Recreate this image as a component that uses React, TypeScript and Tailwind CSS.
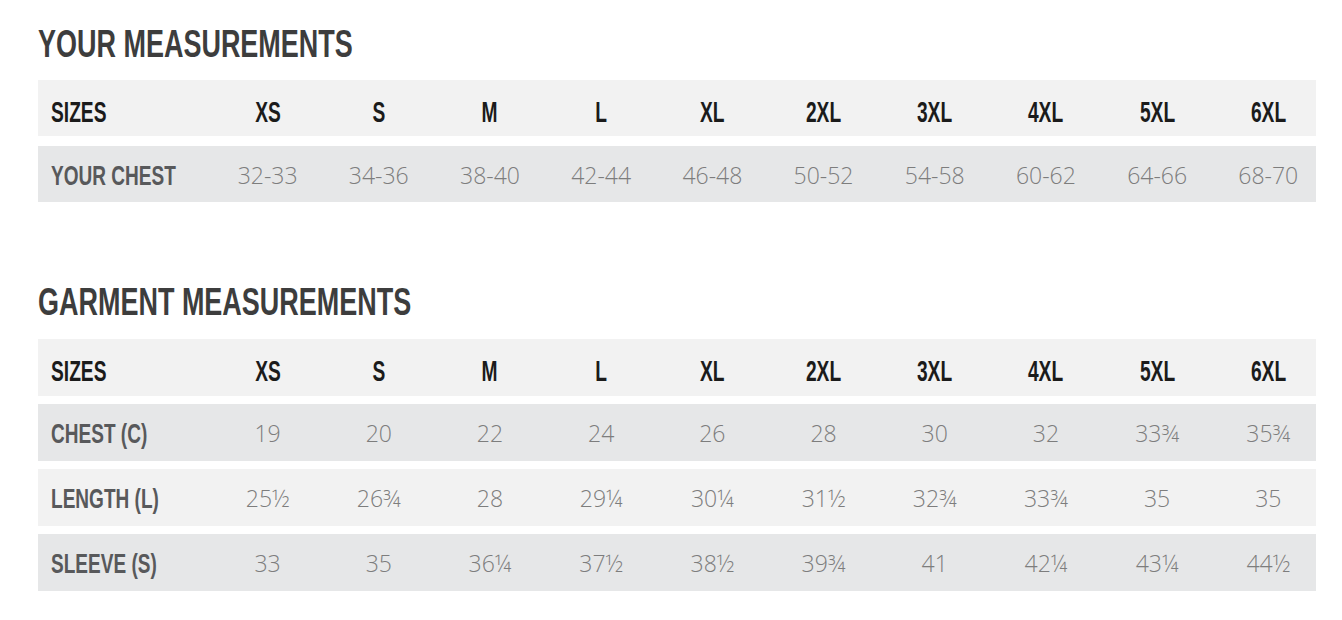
import React from 'react';

const sizes = ['XS', 'S', 'M', 'L', 'XL', '2XL', '3XL', '4XL', '5XL', '6XL'];

const garment = [
  { label: 'CHEST (C)', values: ['19', '20', '22', '24', '26', '28', '30', '32', '33¾', '35¾'], bg: 'bg-[#e6e7e8]' },
  { label: 'LENGTH (L)', values: ['25½', '26¾', '28', '29¼', '30¼', '31½', '32¾', '33¾', '35', '35'], bg: 'bg-[#f2f2f2]' },
  { label: 'SLEEVE (S)', values: ['33', '35', '36¼', '37½', '38½', '39¾', '41', '42¼', '43¼', '44½'], bg: 'bg-[#e6e7e8]' },
];

const chest = ['32-33', '34-36', '38-40', '42-44', '46-48', '50-52', '54-58', '60-62', '64-66', '68-70'];

// no condensed face installed, so squeeze the bold one
const narrow = "font-['Liberation_Sans',sans-serif] font-bold";
const light = "font-['Open_Sans','Liberation_Sans',sans-serif] font-light";

const Title = ({ children }: { children: React.ReactNode }) => (
  <h2 className={`${narrow} text-[38px] leading-none text-[#3d3d3d] origin-left scale-x-[0.71] whitespace-nowrap`}>
    {children}
  </h2>
);

const Row = ({ label, values, bg, header, h }: { label: string; values: string[]; bg: string; header?: boolean; h: string }) => (
  <div className={`grid grid-cols-[174px_repeat(10,111.2px)] w-[1278px] overflow-hidden items-center ${header ? 'pt-2' : 'pt-1'} ${h} ${bg}`}>
    <div className="pl-[13px]">
      {header ? (
        <span className={`${narrow} inline-block origin-left scale-x-[0.64] whitespace-nowrap text-[30px] leading-none text-[#1b1b1b]`}>
          {label}
        </span>
      ) : (
        <span className={`${narrow} inline-block origin-left scale-x-[0.68] whitespace-nowrap text-[28px] leading-none text-[#58595b]`}>
          {label}
        </span>
      )}
    </div>
    {values.map((v, i) => (
      <div key={i} className="text-center">
        {header ? (
          <span className={`${narrow} inline-block scale-x-[0.64] text-[30px] leading-none text-[#1b1b1b]`}>{v}</span>
        ) : (
          <span className={`${light} inline-block pt-px text-[23px] leading-none text-[#7d7d7d]`}>{v}</span>
        )}
      </div>
    ))}
  </div>
);

export default function App() {
  return (
    <div className="w-[1342px] h-[620px] bg-white pl-[38px] pt-[25px]">
      <Title>YOUR MEASUREMENTS</Title>
      <div className="mt-[17px] flex flex-col gap-[10px]">
        <Row label="SIZES" values={sizes} bg="bg-[#f2f2f2]" header h="h-[56px]" />
        <Row label="YOUR CHEST" values={chest} bg="bg-[#e6e7e8]" h="h-[56px]" />
      </div>
      <div className="mt-[81px]">
        <Title>GARMENT MEASUREMENTS</Title>
      </div>
      <div className="mt-[18px] flex flex-col gap-2">
        <Row label="SIZES" values={sizes} bg="bg-[#f2f2f2]" header h="h-[57px]" />
        {garment.map(r => (
          <Row key={r.label} label={r.label} values={r.values} bg={r.bg} h="h-[57px]" />
        ))}
      </div>
    </div>
  );
}
